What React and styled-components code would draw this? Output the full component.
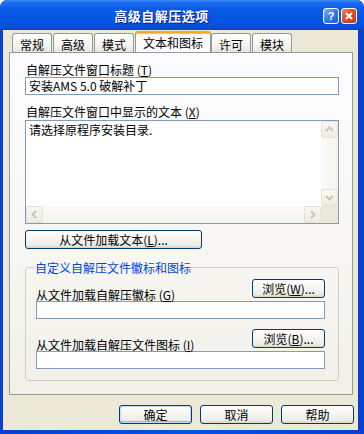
import React from "react";
import styled, { createGlobalStyle, css } from "styled-components";

const Global = createGlobalStyle`
  html, body {
    margin: 0;
    padding: 0;
    background: #ffffff;
  }
  body {
    font-family: "Noto Sans CJK SC", "Liberation Sans", sans-serif;
    font-size: 12px;
    color: #000;
  }
`;

const Window = styled.div`
  width: 364px;
  height: 434px;
  box-sizing: border-box;
  display: flex;
  flex-direction: column;
  padding: 0 6px 4px 3px;
  border-radius: 7px 7px 0 0;
  background: linear-gradient(90deg, #0a3fcf 0%, #0651e6 50%, #0a3fcf 100%);
  overflow: hidden;
`;

const TitleBar = styled.div`
  height: 30px;
  display: flex;
  align-items: center;
  margin: 0 -6px 0 -3px;
  padding: 0 7px 0 0;
  border-radius: 7px 7px 0 0;
  background: linear-gradient(
    180deg,
    #3d8cf6 0%,
    #1e6ef2 8%,
    #0a5ae8 30%,
    #0555e4 60%,
    #0651dc 85%,
    #0947c8 100%
  );
`;

const TitleText = styled.div`
  flex: 1;
  text-align: center;
  color: #ffffff;
  font-weight: bold;
  font-size: 13px;
  letter-spacing: 0.5px;
  text-shadow: 1px 1px 0 #0a1f8a;
`;

const CapButtons = styled.div`
  display: flex;
  gap: 2px;
  margin-top: 1px;
`;

const CapButton = styled.div`
  width: 16px;
  height: 16px;
  box-sizing: border-box;
  border: 1px solid #ffffff;
  border-radius: 3px;
  display: flex;
  align-items: center;
  justify-content: center;
  color: #fff;
  font-family: "Liberation Sans", sans-serif;
  font-weight: bold;
  font-size: 11px;
  ${(p) =>
    p.$close
      ? css`
          background: linear-gradient(135deg, #ee8a6c 0%, #de4f2a 45%, #c23a17 100%);
        `
      : css`
          background: linear-gradient(135deg, #8ab6ff 0%, #3c7cf2 45%, #2158d9 100%);
        `}
`;

const Body = styled.div`
  flex: 1;
  display: flex;
  flex-direction: column;
  background: #ece9d8;
`;

const TabStrip = styled.div`
  height: 23px;
  display: flex;
  align-items: flex-end;
  padding-left: 9px;
`;

const Tab = styled.div`
  box-sizing: border-box;
  padding: 0 7px;
  margin-right: 1px;
  border: 1px solid #919b9c;
  border-radius: 3px 3px 0 0;
  white-space: nowrap;
  display: flex;
  align-items: center;
  ${(p) =>
    p.$active
      ? css`
          height: 22px;
          margin: 0 0 0 0;
          border-bottom: none;
          border-top: 2px solid #f5a623;
          background: #fcfcfe;
          padding-bottom: 2px;
          box-shadow: inset 0 1px 0 #ffc83c;
        `
      : css`
          height: 19px;
          margin-bottom: 1px;
          border-bottom: none;
          background: linear-gradient(180deg, #ffffff 0%, #f6f5f1 60%, #e6e4da 100%);
          padding-top: 2px;
        `}
`;

const Panel = styled.div`
  height: 343px;
  box-sizing: border-box;
  margin: -1px 5px 0 6px;
  border: 1px solid #919b9c;
  background: linear-gradient(180deg, #fcfcfe 0%, #f7f6f2 60%, #f2f0e8 100%);
  padding: 9px 13px 0 15px;
  display: flex;
  flex-direction: column;
`;

const Label = styled.div`
  height: 15px;
  line-height: 15px;
  white-space: nowrap;
  padding-left: 1px;
  ${(p) => p.$gap && css`margin-top: ${p.$gap}px;`}
`;

const Input = styled.div`
  height: 18px;
  box-sizing: border-box;
  border: 1px solid #7f9db9;
  background: #ffffff;
  padding: 0 3px;
  line-height: 16px;
  white-space: nowrap;
  ${(p) => p.$gap && css`margin-top: ${p.$gap}px;`}
`;

const TextBox = styled.div`
  margin-top: 1px;
  height: 104px;
  box-sizing: border-box;
  border: 1px solid #7f9db9;
  background: #ffffff;
  display: grid;
  grid-template-columns: 1fr 17px;
  grid-template-rows: 1fr 17px;
`;

const TextContent = styled.div`
  padding: 1px 3px;
  line-height: 15px;
`;

const VScroll = styled.div`
  display: flex;
  flex-direction: column;
  background: linear-gradient(90deg, #fbfbf8 0%, #f4f3ec 100%);
`;

const HScroll = styled.div`
  display: flex;
  background: linear-gradient(180deg, #fbfbf8 0%, #f4f3ec 100%);
`;

const Track = styled.div`
  flex: 1;
`;

const Corner = styled.div`
  background: #ece9d8;
`;

const ArrowBtn = styled.div`
  width: 17px;
  height: 17px;
  box-sizing: border-box;
  border: 1px solid #e6e3d6;
  border-radius: 2px;
  background: linear-gradient(180deg, #f8f7f2 0%, #eeece2 100%);
  display: flex;
  align-items: center;
  justify-content: center;
`;

const Arrow = ({ dir }) => {
  const pts = {
    up: "4,9 7.5,5.5 11,9",
    down: "4,6 7.5,9.5 11,6",
    left: "9,4 5.5,7.5 9,11",
    right: "6,4 9.5,7.5 6,11",
  }[dir];
  return (
    <svg width="15" height="15" viewBox="0 0 15 15">
      <polyline points={pts} fill="none" stroke="#c9c7b8" strokeWidth="2" />
    </svg>
  );
};

const Button = styled.div`
  box-sizing: border-box;
  height: 19px;
  border: 1px solid #003c74;
  border-radius: 3px;
  background: linear-gradient(180deg, #ffffff 0%, #f5f4ef 50%, #ecebe4 85%, #d8d2c6 100%);
  display: flex;
  align-items: center;
  justify-content: center;
  white-space: nowrap;
  line-height: 15px;
  width: ${(p) => p.$w}px;
  ${(p) => p.$gap && css`margin-top: ${p.$gap}px;`}
  ${(p) =>
    p.$default &&
    css`
      box-shadow: inset 0 0 0 1px #c6dafc, inset 0 -1px 0 1px #97b3ef;
    `}
`;

const Group = styled.fieldset`
  margin: 11px 0 0 0;
  padding: 0 13px 11px 10px;
  border: 1px solid #d0d0bf;
  border-radius: 3px;
  min-width: 0;
`;

const Legend = styled.legend`
  margin-left: -2px;
  padding: 0 1px;
  color: #0046d5;
  line-height: 15px;
  height: 15px;
`;

const BrowseRow = styled.div`
  display: flex;
  align-items: flex-end;
  justify-content: space-between;
  margin-top: ${(p) => p.$gap}px;
`;

const RowLabel = styled.div`
  line-height: 15px;
  margin-bottom: -4px;
  white-space: nowrap;
`;

const Footer = styled.div`
  display: flex;
  justify-content: flex-end;
  gap: 8px;
  padding: 10px 4px 0 0;
`;

export default function App() {
  return (
    <>
      <Global />
      <Window>
        <TitleBar>
          <TitleText>高级自解压选项</TitleText>
          <CapButtons>
            <CapButton>?</CapButton>
            <CapButton $close>
              <svg width="10" height="10" viewBox="0 0 10 10">
                <path d="M2 2 L8 8 M8 2 L2 8" stroke="#fff" strokeWidth="2" />
              </svg>
            </CapButton>
          </CapButtons>
        </TitleBar>
        <Body>
          <TabStrip>
            <Tab>常规</Tab>
            <Tab>高级</Tab>
            <Tab>模式</Tab>
            <Tab $active>文本和图标</Tab>
            <Tab>许可</Tab>
            <Tab>模块</Tab>
          </TabStrip>
          <Panel>
            <Label>
              自解压文件窗口标题 (<u>T</u>)
            </Label>
            <Input>安装AMS 5.0 破解补丁</Input>
            <Label $gap={9}>
              自解压文件窗口中显示的文本 (<u>X</u>)
            </Label>
            <TextBox>
              <TextContent>请选择原程序安装目录.</TextContent>
              <VScroll>
                <ArrowBtn>
                  <Arrow dir="up" />
                </ArrowBtn>
                <Track />
                <ArrowBtn>
                  <Arrow dir="down" />
                </ArrowBtn>
              </VScroll>
              <HScroll>
                <ArrowBtn>
                  <Arrow dir="left" />
                </ArrowBtn>
                <Track />
                <ArrowBtn>
                  <Arrow dir="right" />
                </ArrowBtn>
              </HScroll>
              <Corner />
            </TextBox>
            <Button $w={177} $gap={6}>
              从文件加载文本(<u>L</u>)...
            </Button>
            <Group>
              <Legend>自定义自解压文件徽标和图标</Legend>
              <BrowseRow $gap={4}>
                <RowLabel>
                  从文件加载自解压徽标 (<u>G</u>)
                </RowLabel>
                <Button $w={73}>
                  浏览(<u>W</u>)...
                </Button>
              </BrowseRow>
              <Input $gap={3} />
              <BrowseRow $gap={10}>
                <RowLabel>
                  从文件加载自解压文件图标 (<u>I</u>)
                </RowLabel>
                <Button $w={73}>
                  浏览(<u>B</u>)...
                </Button>
              </BrowseRow>
              <Input $gap={3} />
            </Group>
          </Panel>
          <Footer>
            <Button $w={73} $default>
              确定
            </Button>
            <Button $w={73}>取消</Button>
            <Button $w={73}>帮助</Button>
          </Footer>
        </Body>
      </Window>
    </>
  );
}
